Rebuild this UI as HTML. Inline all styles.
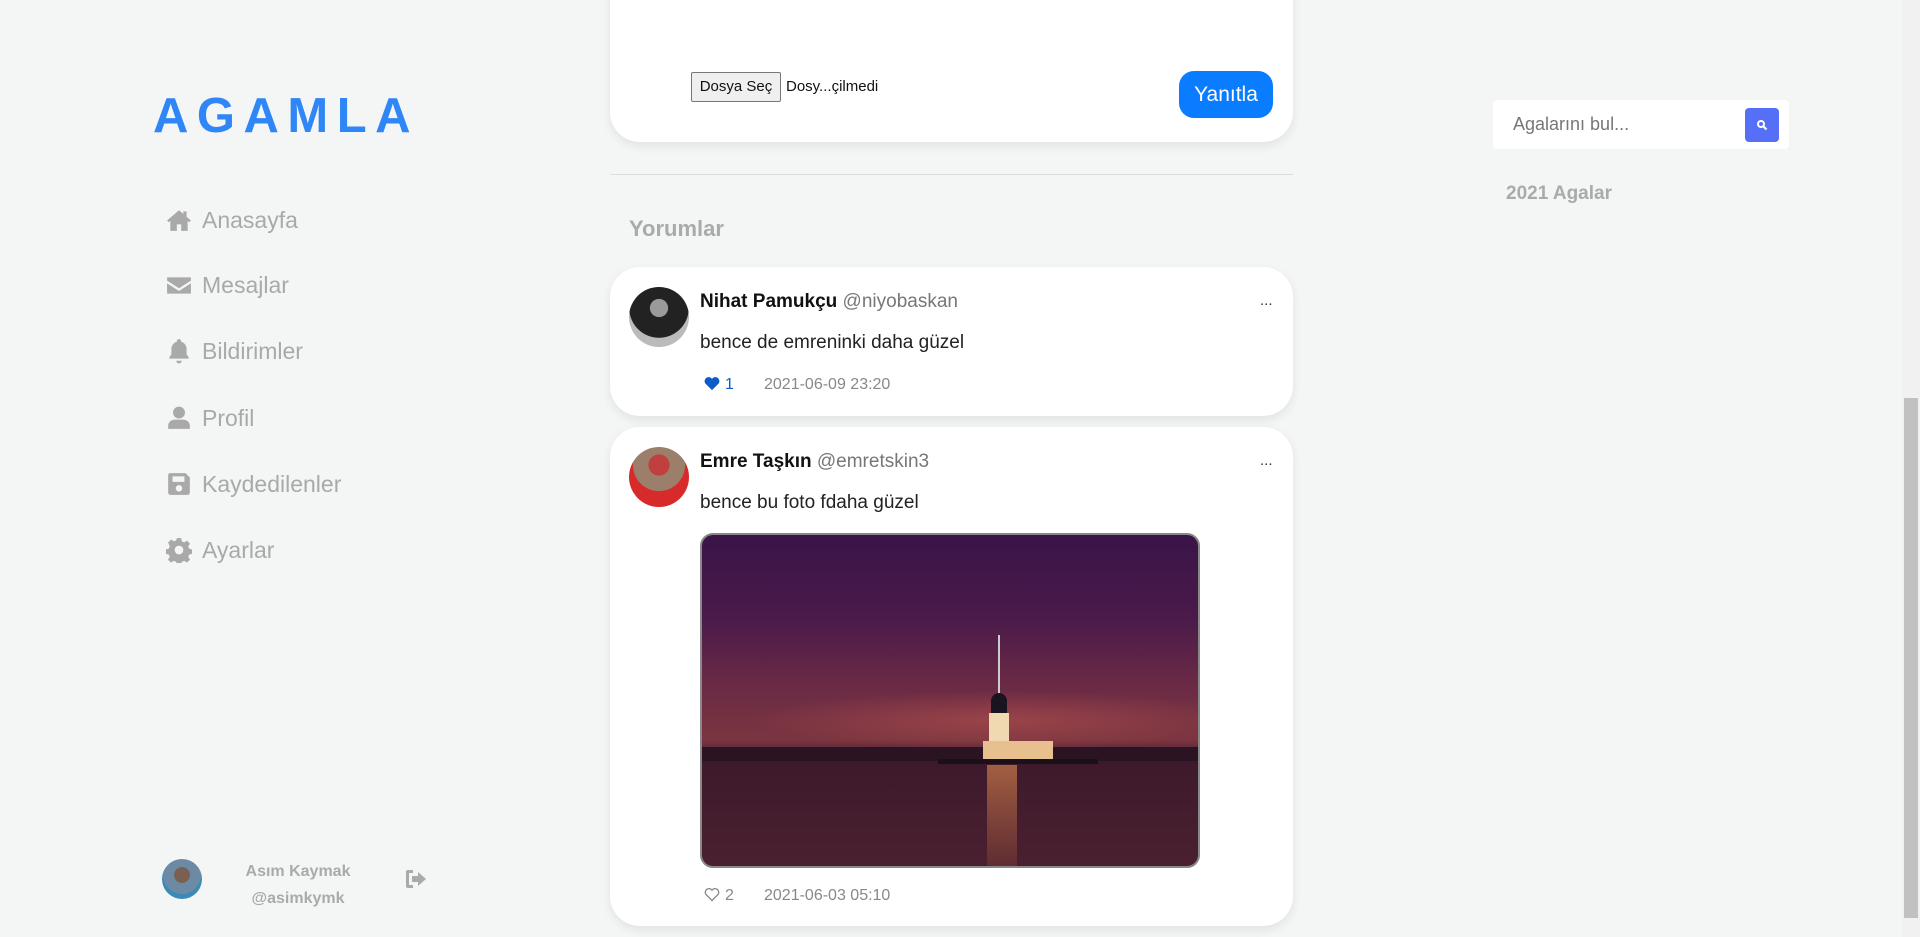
<!DOCTYPE html>
<html><head><meta charset="utf-8"><style>
*{margin:0;padding:0;box-sizing:border-box}
body{width:1920px;height:937px;overflow:hidden;background:#f4f6f5;font-family:"Liberation Sans",sans-serif;position:relative}
.abs{position:absolute}
.logo{left:153px;top:88px;font-size:49px;letter-spacing:8.5px;color:#2f86f6;font-weight:bold}
.nav{left:166px;font-size:23px;color:#a9a9a9;display:flex;align-items:center;height:40px}
.nav svg{width:26px;height:26px;fill:#a9a9a9;margin-right:10px}
.card{background:#fff;border-radius:30px;box-shadow:0 4px 10px rgba(0,0,0,.08);left:610px;width:683px}
.name{font-size:19px;color:#111;font-weight:bold}
.handle{font-size:19px;color:#777;font-weight:normal}
.txt{font-size:19px;color:#222}
.meta{font-size:16px;color:#888}
.dots{font-size:15px;color:#333}
</style></head><body>
<div class="abs logo">AGAMLA</div>

<div class="abs nav" style="top:200px"><svg viewBox="0 0 24 24"><path d="M12 3L1 12.5l1.5 1.6L4 12.8V22h6v-6h4v6h6v-9.2l1.5 1.3 1.5-1.6L19 9V4h-3v2.4z"/></svg>Anasayfa</div>
<div class="abs nav" style="top:265px"><svg viewBox="0 0 24 24"><path d="M1 5h22v3l-11 7L1 8zM1 10.5l11 7 11-7V20H1z"/></svg>Mesajlar</div>
<div class="abs nav" style="top:331px"><svg viewBox="0 0 24 24"><path d="M12 1a2 2 0 012 2v.5c3 .8 5 3.5 5 6.5v5l2 3v1H3v-1l2-3v-5c0-3 2-5.7 5-6.5V3a2 2 0 012-2zM9.5 21h5a2.5 2.5 0 01-5 0z"/></svg>Bildirimler</div>
<div class="abs nav" style="top:398px"><svg viewBox="0 0 24 24"><circle cx="12" cy="7" r="5.5"/><path d="M2 22v-3c0-3 3-5.5 6-5.5h8c3 0 6 2.5 6 5.5v3z"/></svg>Profil</div>
<div class="abs nav" style="top:464px"><svg viewBox="0 0 24 24"><path d="M3 2h15l4 4v14a2 2 0 01-2 2H4a2 2 0 01-2-2V4a2 2 0 011-2zm3 3v5h11V5zm6 8a3 3 0 100 6 3 3 0 000-6z"/></svg>Kaydedilenler</div>
<div class="abs nav" style="top:530px"><svg viewBox="0 0 24 24"><path d="M10 1h4l.6 3 2.2 1 2.6-1.7 2.8 2.8-1.7 2.6 1 2.2 3 .6v4l-3 .6-1 2.2 1.7 2.6-2.8 2.8-2.6-1.7-2.2 1-.6 3h-4l-.6-3-2.2-1-2.6 1.7-2.8-2.8 1.7-2.6-1-2.2-3-.6v-4l3-.6 1-2.2L1.9 5.1 4.7 2.3l2.6 1.7 2.2-1zm2 7a4 4 0 100 8 4 4 0 000-8z"/></svg>Ayarlar</div>

<div class="abs" style="left:162px;top:859px;width:40px;height:40px;border-radius:50%;background:radial-gradient(circle at 50% 40%,#7a6050 0 25%,#6d8aa5 26% 60%,#3a8ab8 61%)"></div>
<div class="abs" style="left:230px;top:858px;width:136px;text-align:center;font-size:16px;font-weight:bold;color:#aaa;line-height:27px">Asım Kaymak<br>@asimkymk</div>
<svg class="abs" style="left:404px;top:867px" width="24" height="24" viewBox="0 0 24 24" fill="#aaa"><path d="M9 3H4a2 2 0 00-2 2v14a2 2 0 002 2h5v-3H5V6h4z"/><path d="M14 5v4H8v6h6v4l8-7z"/></svg>

<div class="abs card" style="top:-40px;height:182px"></div>
<div class="abs" style="left:691px;top:72px;width:90px;height:30px;border:1px solid #777;border-radius:2px;background:#efefef;font-size:15px;color:#111;text-align:center;line-height:28px">Dosya Seç</div>
<div class="abs" style="left:786px;top:78px;font-size:15px;color:#111">Dosy...çilmedi</div>
<div class="abs" style="left:1179px;top:71px;width:94px;height:47px;border-radius:15px;background:#0a7cff;color:#fff;font-size:21px;text-align:center;line-height:47px">Yanıtla</div>
<div class="abs" style="left:610px;top:174px;width:683px;height:1px;background:#dcdfdf"></div>
<div class="abs" style="left:629px;top:216px;font-size:22px;font-weight:bold;color:#aaa">Yorumlar</div>

<div class="abs card" style="top:267px;height:149px"></div>
<div class="abs" style="left:629px;top:287px;width:60px;height:60px;border-radius:50%;background:radial-gradient(circle at 50% 35%,#9a9a9a 0 18%,#222 19% 60%,#bbb 61%)"></div>
<div class="abs name" style="left:700px;top:291px">Nihat Pamukçu <span class="handle">@niyobaskan</span></div>
<div class="abs dots" style="left:1260px;top:292px">...</div>
<div class="abs txt" style="left:700px;top:332px">bence de emreninki daha güzel</div>
<svg class="abs" style="left:704px;top:376px" width="16" height="15" viewBox="0 0 24 22"><path d="M12 21L2 11A6 6 0 0112 4a6 6 0 0110 7z" fill="#0b5cc7"/></svg>
<div class="abs meta" style="left:725px;top:376px;color:#0b5cc7">1</div>
<div class="abs meta" style="left:764px;top:376px">2021-06-09 23:20</div>

<div class="abs card" style="top:427px;height:499px"></div>
<div class="abs" style="left:629px;top:447px;width:60px;height:60px;border-radius:50%;background:radial-gradient(circle at 50% 30%,#c04040 0 20%,#9b7f6a 21% 50%,#d82a2a 51%)"></div>
<div class="abs name" style="left:700px;top:451px">Emre Taşkın <span class="handle">@emretskin3</span></div>
<div class="abs dots" style="left:1260px;top:452px">...</div>
<div class="abs txt" style="left:700px;top:492px">bence bu foto fdaha güzel</div>
<div class="abs" style="left:700px;top:533px;width:500px;height:335px;border:2px solid #888;border-radius:13px;overflow:hidden;background:linear-gradient(180deg,#3a1448 0%,#4a1a4a 25%,#6a2a45 45%,#7a3540 62%,#3a1a30 68%,#3e1a2c 70%,#4a2030 100%)">
 <div class="abs" style="left:0;top:150px;width:500px;height:70px;background:radial-gradient(ellipse at 60% 50%,rgba(200,90,80,.45),transparent 60%)"></div>
 <div class="abs" style="left:0;top:212px;width:500px;height:14px;background:#2a1424"></div>
 <div class="abs" style="left:296px;top:100px;width:2px;height:60px;background:#ccc"></div>
 <div class="abs" style="left:289px;top:158px;width:16px;height:20px;background:#1a1420;border-radius:8px 8px 0 0"></div>
 <div class="abs" style="left:287px;top:178px;width:20px;height:44px;background:#f0d8b0"></div>
 <div class="abs" style="left:281px;top:206px;width:70px;height:18px;background:#e8c090"></div>
 <div class="abs" style="left:236px;top:224px;width:160px;height:5px;background:#1a1018"></div>
 <div class="abs" style="left:285px;top:230px;width:30px;height:105px;background:linear-gradient(180deg,rgba(230,140,80,.6),rgba(200,100,60,.15))"></div>
</div>
<svg class="abs" style="left:704px;top:887px" width="16" height="15" viewBox="0 0 24 22"><path d="M12 20L3 11A5.5 5.5 0 0112 4.5 5.5 5.5 0 0121 11z" fill="none" stroke="#888" stroke-width="2"/></svg>
<div class="abs meta" style="left:725px;top:887px">2</div>
<div class="abs meta" style="left:764px;top:887px">2021-06-03 05:10</div>

<div class="abs" style="left:1493px;top:100px;width:296px;height:49px;background:#fff;border-radius:4px"></div>
<div class="abs" style="left:1513px;top:114px;font-size:18px;color:#777">Agalarını bul...</div>
<div class="abs" style="left:1745px;top:108px;width:34px;height:34px;background:#5570f7;border-radius:4px"></div>
<svg class="abs" style="left:1756px;top:119px" width="12" height="12" viewBox="0 0 12 12"><circle cx="5" cy="5" r="3" fill="none" stroke="#fff" stroke-width="2"/><path d="M7 7l3.5 3.5" stroke="#fff" stroke-width="2.2"/></svg>
<div class="abs" style="left:1506px;top:183px;font-size:19px;font-weight:bold;color:#aaa">2021 Agalar</div>

<div class="abs" style="left:1902px;top:0;width:18px;height:937px;background:#f1f1f1"></div>
<div class="abs" style="left:1904px;top:398px;width:14px;height:520px;background:#c1c1c1"></div>
</body></html>
